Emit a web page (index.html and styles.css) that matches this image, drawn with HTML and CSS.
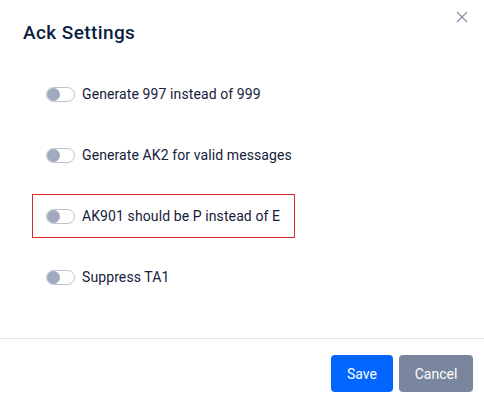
FILE: index.html
```html
<!DOCTYPE html>
<html lang="en">
<head>
<meta charset="UTF-8" />
<meta name="viewport" content="width=device-width, initial-scale=1" />
<title>Ack Settings</title>
<link rel="stylesheet" href="styles.css">
</head>
<body>

<div class="modal">
  <div class="modal-header">
    <h2>Ack Settings</h2>
    <button class="close" aria-label="Close">
      <svg width="12" height="12" viewBox="0 0 12 12">
        <path d="M1 1L11 11M11 1L1 11" stroke="#8a93a7" stroke-width="1.3" fill="none" />
      </svg>
    </button>
  </div>

  <div class="modal-body">
    <label class="option">
      <input type="checkbox" />
      <span class="switch"></span>
      <span class="text">Generate 997 instead of 999</span>
    </label>
    <label class="option">
      <input type="checkbox" />
      <span class="switch"></span>
      <span class="text">Generate AK2 for valid messages</span>
    </label>
    <label class="option focused">
      <input type="checkbox" />
      <span class="switch"></span>
      <span class="text">AK901 should be P instead of E</span>
    </label>
    <label class="option">
      <input type="checkbox" />
      <span class="switch"></span>
      <span class="text">Suppress TA1</span>
    </label>
  </div>

  <div class="modal-footer">
    <button class="btn btn-primary">Save</button>
    <button class="btn btn-secondary">Cancel</button>
  </div>
</div>

</body>
</html>
```

FILE: styles.css
```css
body {
  margin: 0;
  font-family: Roboto, "Noto Sans", sans-serif;
  background: #fff;
  color: #14213a;
}

.modal {
  width: 484px;
  height: 403px;
  display: flex;
  flex-direction: column;
}

.modal-header {
  display: flex;
  justify-content: space-between;
  align-items: flex-start;
  padding: 0 16px 0 23px;
  height: 72px;
}

.modal-header h2 {
  margin: 21px 0 0;
  font-size: 19px;
  font-weight: 500;
  color: #0b1d40;
  letter-spacing: 0.4px;
}

.close {
  margin-top: 11px;
  padding: 0;
  border: none;
  background: none;
  cursor: pointer;
  line-height: 0;
}

.modal-body {
  display: flex;
  flex-direction: column;
  align-items: flex-start;
  gap: 17px;
  padding-left: 32px;
  height: 266px;
}

.option {
  display: flex;
  align-items: center;
  gap: 7px;
  width: 263px;
  height: 44px;
  box-sizing: border-box;
  padding-left: 13px;
  border: 1px solid transparent;
  font-size: 14px;
  letter-spacing: 0.1px;
  color: #14213a;
  white-space: nowrap;
  cursor: pointer;
}

.option.focused {
  border-color: #e0262f;
}

.option input {
  display: none;
}

.switch {
  position: relative;
  width: 29px;
  height: 15px;
  box-sizing: border-box;
  border: 1px solid #bcc2d0;
  border-radius: 8px;
  background: #fff;
  flex-shrink: 0;
}

.switch::after {
  content: "";
  position: absolute;
  top: 0;
  left: 0;
  width: 13px;
  height: 13px;
  border-radius: 50%;
  background: #a1a9be;
}

.modal-footer {
  border-top: 1px solid #e3e3ef;
  display: flex;
  justify-content: flex-end;
  gap: 6px;
  padding: 16px 11px 0 0;
}

.btn {
  height: 37px;
  border: none;
  border-radius: 4px;
  color: #fff;
  font-family: inherit;
  font-size: 14px;
  cursor: pointer;
}

.btn-primary {
  width: 62px;
  background: #0066ff;
}

.btn-secondary {
  width: 74px;
  background: #7a869d;
}
```
